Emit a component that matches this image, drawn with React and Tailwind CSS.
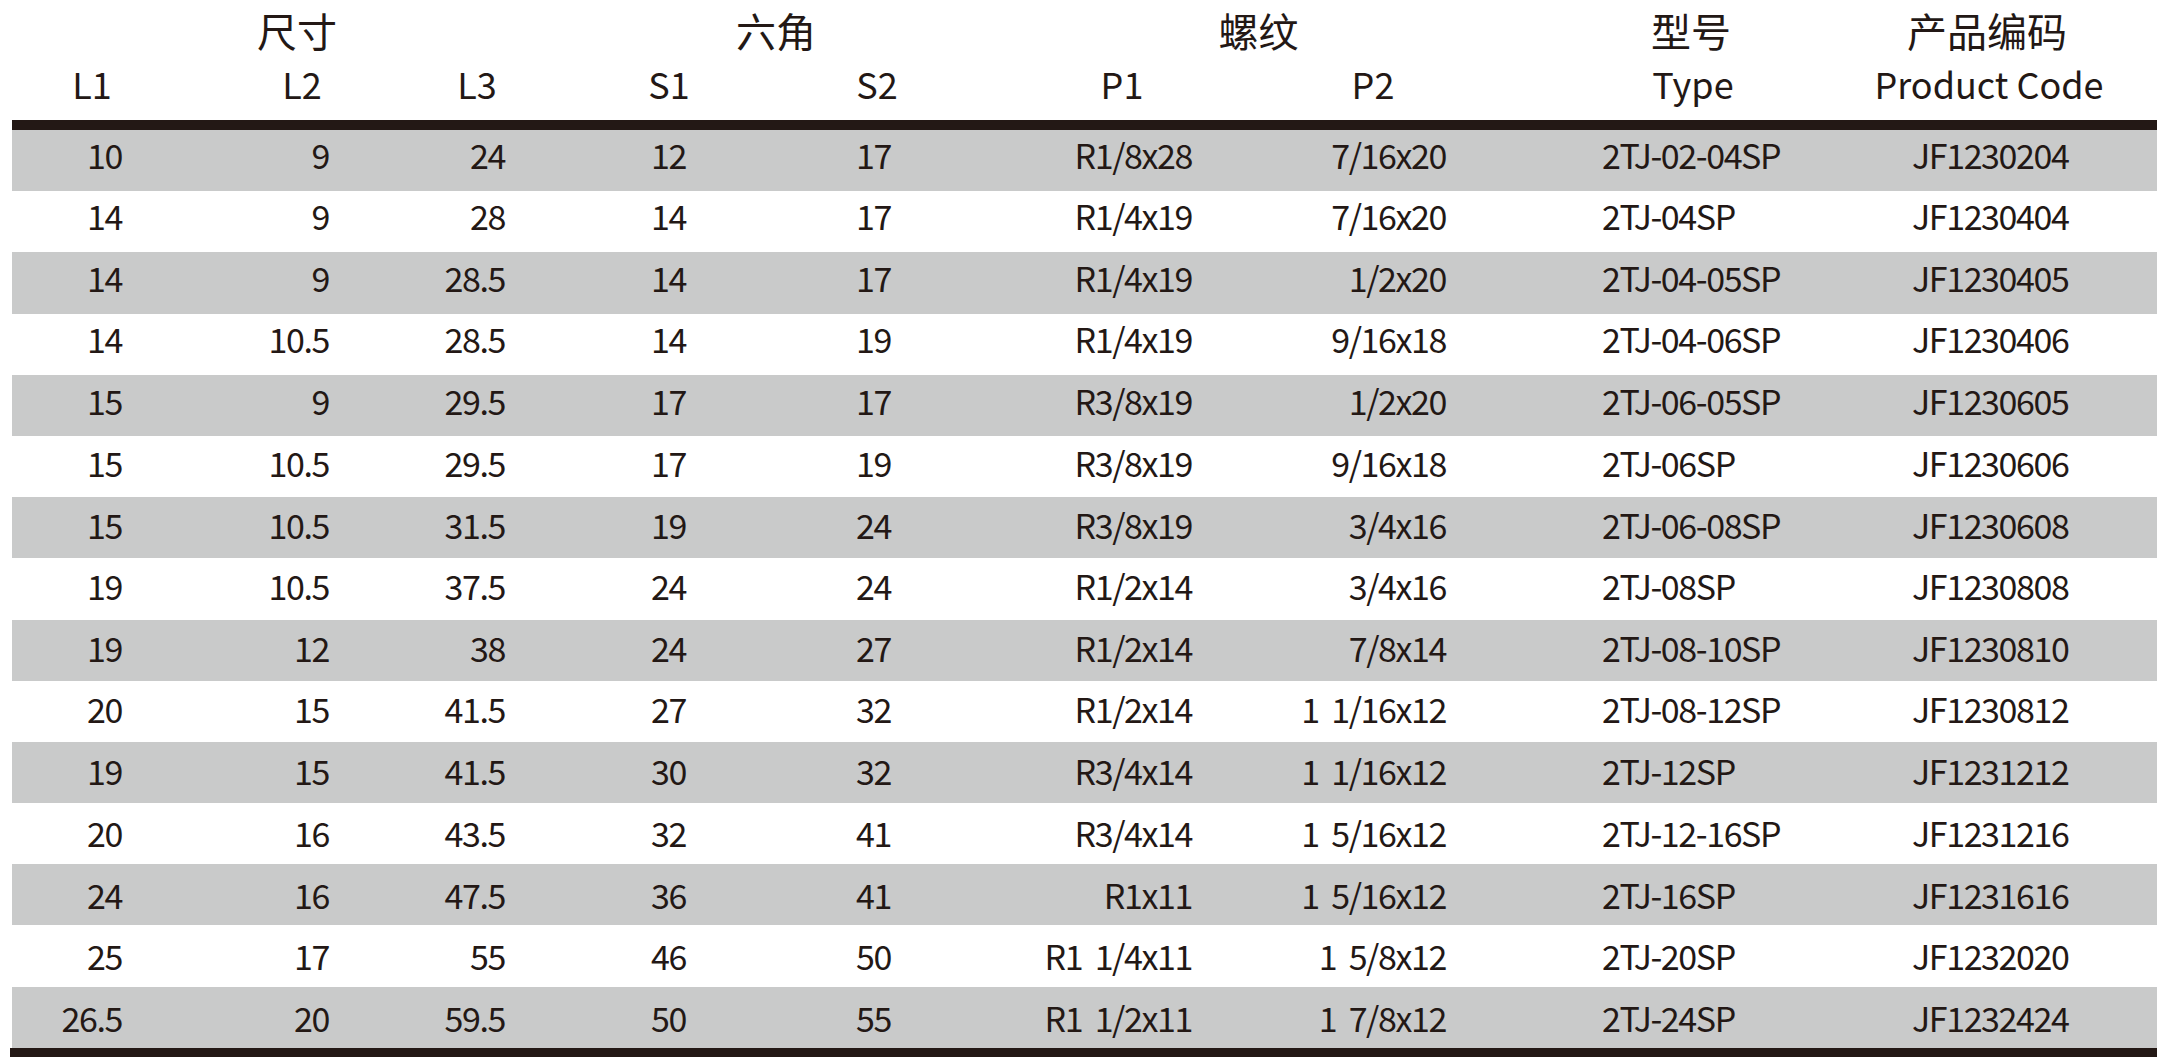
import React from "react";

const rows = [
  ["10", "9", "24", "12", "17", "R1/8x28", "7/16x20", "2TJ-02-04SP", "JF1230204"],
  ["14", "9", "28", "14", "17", "R1/4x19", "7/16x20", "2TJ-04SP", "JF1230404"],
  ["14", "9", "28.5", "14", "17", "R1/4x19", "1/2x20", "2TJ-04-05SP", "JF1230405"],
  ["14", "10.5", "28.5", "14", "19", "R1/4x19", "9/16x18", "2TJ-04-06SP", "JF1230406"],
  ["15", "9", "29.5", "17", "17", "R3/8x19", "1/2x20", "2TJ-06-05SP", "JF1230605"],
  ["15", "10.5", "29.5", "17", "19", "R3/8x19", "9/16x18", "2TJ-06SP", "JF1230606"],
  ["15", "10.5", "31.5", "19", "24", "R3/8x19", "3/4x16", "2TJ-06-08SP", "JF1230608"],
  ["19", "10.5", "37.5", "24", "24", "R1/2x14", "3/4x16", "2TJ-08SP", "JF1230808"],
  ["19", "12", "38", "24", "27", "R1/2x14", "7/8x14", "2TJ-08-10SP", "JF1230810"],
  ["20", "15", "41.5", "27", "32", "R1/2x14", "1  1/16x12", "2TJ-08-12SP", "JF1230812"],
  ["19", "15", "41.5", "30", "32", "R3/4x14", "1  1/16x12", "2TJ-12SP", "JF1231212"],
  ["20", "16", "43.5", "32", "41", "R3/4x14", "1  5/16x12", "2TJ-12-16SP", "JF1231216"],
  ["24", "16", "47.5", "36", "41", "R1x11", "1  5/16x12", "2TJ-16SP", "JF1231616"],
  ["25", "17", "55", "46", "50", "R1  1/4x11", "1  5/8x12", "2TJ-20SP", "JF1232020"],
  ["26.5", "20", "59.5", "50", "55", "R1  1/2x11", "1  7/8x12", "2TJ-24SP", "JF1232424"],
];

const cellCls = [
  "w-[110px] text-right",
  "w-[207px] text-right",
  "w-[176px] text-right",
  "w-[181px] text-right",
  "w-[205px] text-right",
  "w-[301px] text-right",
  "w-[254px] text-right",
  "w-[466px] pl-[156px] text-left",
  "w-[245px] text-left",
];

const subHeads = [
  ["L1", "w-[184px]"],
  ["L2", "w-[236px]"],
  ["L3", "w-[114px]"],
  ["S1", "w-[270px]"],
  ["S2", "w-[146px]"],
  ["P1", "w-[344px]"],
  ["P2", "w-[158px]"],
  ["Type", "w-[482px]"],
  ["Product Code", "w-[110px]"],
];

const cnHeads = [
  ["尺寸", "w-[594px]"],
  ["六角", "w-[364px]"],
  ["螺纹", "w-[601px]"],
  ["型号", "w-[264px]"],
  ["产品编码", "w-[328px]"],
];

export default function App() {
  return (
    <div
      className="w-[2167px] h-[1063px] bg-white text-[#231815] overflow-hidden"
      style={{ fontFamily: '"Noto Sans CJK SC", "Noto Sans", sans-serif' }}
    >
      <div className="flex h-[60px] items-center text-[40px] leading-none">
        {cnHeads.map(([t, w]) => (
          <div key={t} className={`${w} flex justify-center whitespace-nowrap`}>
            {t}
          </div>
        ))}
      </div>
      <div className="flex h-[60px] items-center pb-[14px] text-[36px] leading-none">
        {subHeads.map(([t, w]) => (
          <div key={t} className={`${w} flex justify-center whitespace-nowrap`}>
            {t}
          </div>
        ))}
      </div>
      <div className="ml-[12px] w-[2145px] h-[10px] bg-[#231815]" />
      <div className="ml-[12px] w-[2145px] flex flex-col">
        {rows.map((r, i) => (
          <div
            key={i}
            className={`flex h-[61.2px] items-center text-[34px] leading-none tracking-[-1.4px] ${
              i % 2 === 0 ? "bg-[#c9caca]" : "bg-white"
            }`}
          >
            <div
              className="flex"
              style={{ transform: `translateY(${(-6.5 + i * 0.536).toFixed(2)}px)` }}
            >
              {r.map((v, j) => (
                <div key={j} className={`${cellCls[j]} whitespace-pre shrink-0`}>
                  {v}
                </div>
              ))}
            </div>
          </div>
        ))}
      </div>
      <div className="ml-[10px] w-[2147px] h-[9px] bg-[#231815]" />
    </div>
  );
}
